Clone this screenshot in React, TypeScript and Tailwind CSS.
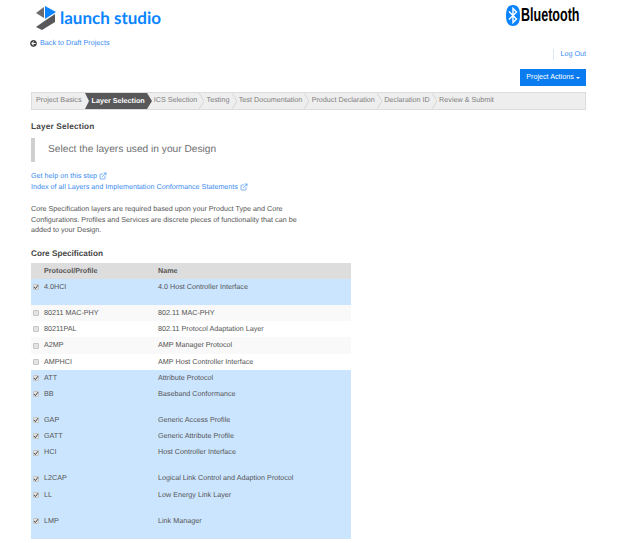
import { ExternalLink } from "lucide-react";
import { FaArrowCircleLeft } from "react-icons/fa";

type Layer = {
  code: string;
  name: string;
  checked: boolean;
  tall?: boolean;
};

const steps = [
  "Project Basics",
  "Layer Selection",
  "ICS Selection",
  "Testing",
  "Test Documentation",
  "Product Declaration",
  "Declaration ID",
  "Review & Submit",
];

const layers: Layer[] = [
  { code: "4.0HCI", name: "4.0 Host Controller Interface", checked: true, tall: true },
  { code: "80211 MAC-PHY", name: "802.11 MAC-PHY", checked: false },
  { code: "80211PAL", name: "802.11 Protocol Adaptation Layer", checked: false },
  { code: "A2MP", name: "AMP Manager Protocol", checked: false },
  { code: "AMPHCI", name: "AMP Host Controller Interface", checked: false },
  { code: "ATT", name: "Attribute Protocol", checked: true },
  { code: "BB", name: "Baseband Conformance", checked: true, tall: true },
  { code: "GAP", name: "Generic Access Profile", checked: true },
  { code: "GATT", name: "Generic Attribute Profile", checked: true },
  { code: "HCI", name: "Host Controller Interface", checked: true, tall: true },
  { code: "L2CAP", name: "Logical Link Control and Adaption Protocol", checked: true },
  { code: "LL", name: "Low Energy Link Layer", checked: true, tall: true },
  { code: "LMP", name: "Link Manager", checked: true, tall: true },
];

function LaunchLogo() {
  return (
    <svg width="24" height="25" viewBox="0 0 24 25" className="shrink-0">
      <path d="M1 8 L9 2 L9 13 Z" fill="#6b6b6d" />
      <path d="M10 1 L21 7 L10 14 Z" fill="#0a84ff" />
      <path d="M20 9 L20 17 L7 25 L1 22 L11 15 Z" fill="#58585a" />
    </svg>
  );
}

function BluetoothLogo() {
  return (
    <svg width="14" height="21" viewBox="0 0 14 21" className="shrink-0">
      <path d="M7 0 C12 0 14 4 14 10.5 C14 17 12 21 7 21 C2 21 0 17 0 10.5 C0 4 2 0 7 0 Z" fill="#0a84ff" />
      <path
        d="M3 6.5 L10.5 14 L7 17.5 L7 3.5 L10.5 7 L3 14.5"
        fill="none"
        stroke="#fff"
        strokeWidth="1.4"
      />
    </svg>
  );
}

function Check({ checked }: { checked: boolean }) {
  return (
    <span className="flex size-[6px] items-center justify-center rounded-[1px] border border-[#c4c4c4] bg-[#e4e4e4]">
      {checked ? (
        <svg width="6" height="6" viewBox="0 0 6 6" className="shrink-0">
          <path d="M1 3 L2.4 4.6 L5 1.2" fill="none" stroke="#444" strokeWidth="1" />
        </svg>
      ) : null}
    </span>
  );
}

function StepBar() {
  return (
    <div className="flex h-[18px] items-stretch border border-[#dcdcdc] bg-[#eeeeee] pl-[4px]">
      {steps.map((s, i) => {
        if (s === "Layer Selection") {
          return (
            <div key={s} className="ml-[3px] mr-[2px] flex items-center">
              <svg width="7" height="16" viewBox="0 0 7 16" className="-mr-px shrink-0">
                <path d="M0 0 H7 V16 H0 L4 8 Z" fill="#58585a" />
              </svg>
              <span className="bg-[#58585a] py-[3px] pl-px pr-[2px] font-bold leading-[10px] text-white">{s}</span>
              <svg width="5" height="16" viewBox="0 0 5 16" className="shrink-0">
                <path d="M0 0 L5 8 L0 16 Z" fill="#58585a" />
              </svg>
            </div>
          );
        }
        return (
          <div key={s} className="flex items-center">
            <span className="text-[#808080]">{s}</span>
            {i > 1 && i < steps.length - 1 ? (
              <svg width="5" height="16" viewBox="0 0 5 16" className="mx-[2.2px] shrink-0">
                <path d="M0 0 L5 8 L0 16" fill="none" stroke="#d0d0d0" strokeWidth="0.8" />
              </svg>
            ) : null}
          </div>
        );
      })}
    </div>
  );
}

export default function App() {
  return (
    <div className="h-[543px] w-[621px] overflow-hidden bg-white font-['Liberation_Sans',Arial,sans-serif] text-[7.2px] leading-[10.5px] text-[#555555] [text-rendering:geometricPrecision]">
      <div className="ml-[30px] w-[556px]">
        {/* top header */}
        <div className="flex h-[38px] items-start justify-between">
          <div className="ml-[5px] mt-[5px] flex items-center gap-[1px]">
            <LaunchLogo />
            <span className="font-['Lato',sans-serif] text-[17px] font-bold leading-[25px] text-[#0a84ff]">
              launch studio
            </span>
          </div>
          <div className="mr-[7px] mt-[5px] flex items-center gap-[1px]">
            <BluetoothLogo />
            <span className="relative w-[58px] origin-left scale-x-[0.66] whitespace-nowrap text-[19px] font-bold leading-[21px] text-black">
              Bluetooth
            </span>
          </div>
        </div>

        <div className="flex h-[10px] items-center gap-[3px] pt-px">
          <FaArrowCircleLeft className="size-[7px] text-[#444]" />
          <a className="text-[#3b8cf0]">Back to Draft Projects</a>
        </div>

        <div className="mt-px flex justify-end">
          <span className="border-l border-[#dbe9fb] pl-[6px] text-[#3b8cf0]">Log Out</span>
        </div>

        <div className="mt-[9px] flex justify-end">
          <button className="flex h-[17px] w-[66px] items-center justify-center gap-[2px] bg-[#0a7cf0] text-white">
            Project Actions
            <span className="mt-px border-x-[2px] border-t-[2px] border-x-transparent border-t-white" />
          </button>
        </div>

        <div className="ml-px mt-[6px]">
          <StepBar />
        </div>

        <div className="ml-px">
          <h1 className="mt-[12px] text-[8.2px] font-bold tracking-[0.2px] text-[#444]">Layer Selection</h1>

          <div className="mt-[6px] flex h-[24px] items-center border-l-[4px] border-[#cfcfcf] pl-[13px] text-[10.2px] text-[#707070]">
            Select the layers used in your Design
          </div>

          <div className="mt-[9px] text-[#3b8cf0]">
            <div className="flex items-center gap-[2px]">
              Get help on this step <ExternalLink size={8} />
            </div>
            <div className="flex items-center gap-[2px]">
              Index of all Layers and Implementation Conformance Statements <ExternalLink size={8} />
            </div>
          </div>

          <p className="mt-[12px] w-[272px] text-[#555]">
            Core Specification layers are required based upon your Product Type and Core Configurations. Profiles and
            Services are discrete pieces of functionality that can be added to your Design.
          </p>

          <h2 className="mt-[13px] text-[8.2px] font-bold text-[#444]">Core Specification</h2>

          <div className="mt-[4px] w-[320px]">
            <div className="flex h-[16px] items-center bg-[#dddddd] font-bold text-[#555]">
              <span className="w-[127px] pl-[13px]">Protocol/Profile</span>
              <span>Name</span>
            </div>
            {layers.map((l, i) => (
              <div
                key={l.code}
                className={`flex items-start pt-[3px] ${l.tall ? "h-[26px]" : "h-[16.2px]"} ${
                  l.checked ? "bg-[#cce5ff]" : i % 2 === 1 ? "bg-[#f9f9f9]" : "bg-white"
                }`}
              >
                <span className="flex h-[10.5px] w-[13px] items-center pl-[2px]">
                  <Check checked={l.checked} />
                </span>
                <span className="w-[114px]">{l.code}</span>
                <span>{l.name}</span>
              </div>
            ))}
          </div>
        </div>
      </div>
    </div>
  );
}
